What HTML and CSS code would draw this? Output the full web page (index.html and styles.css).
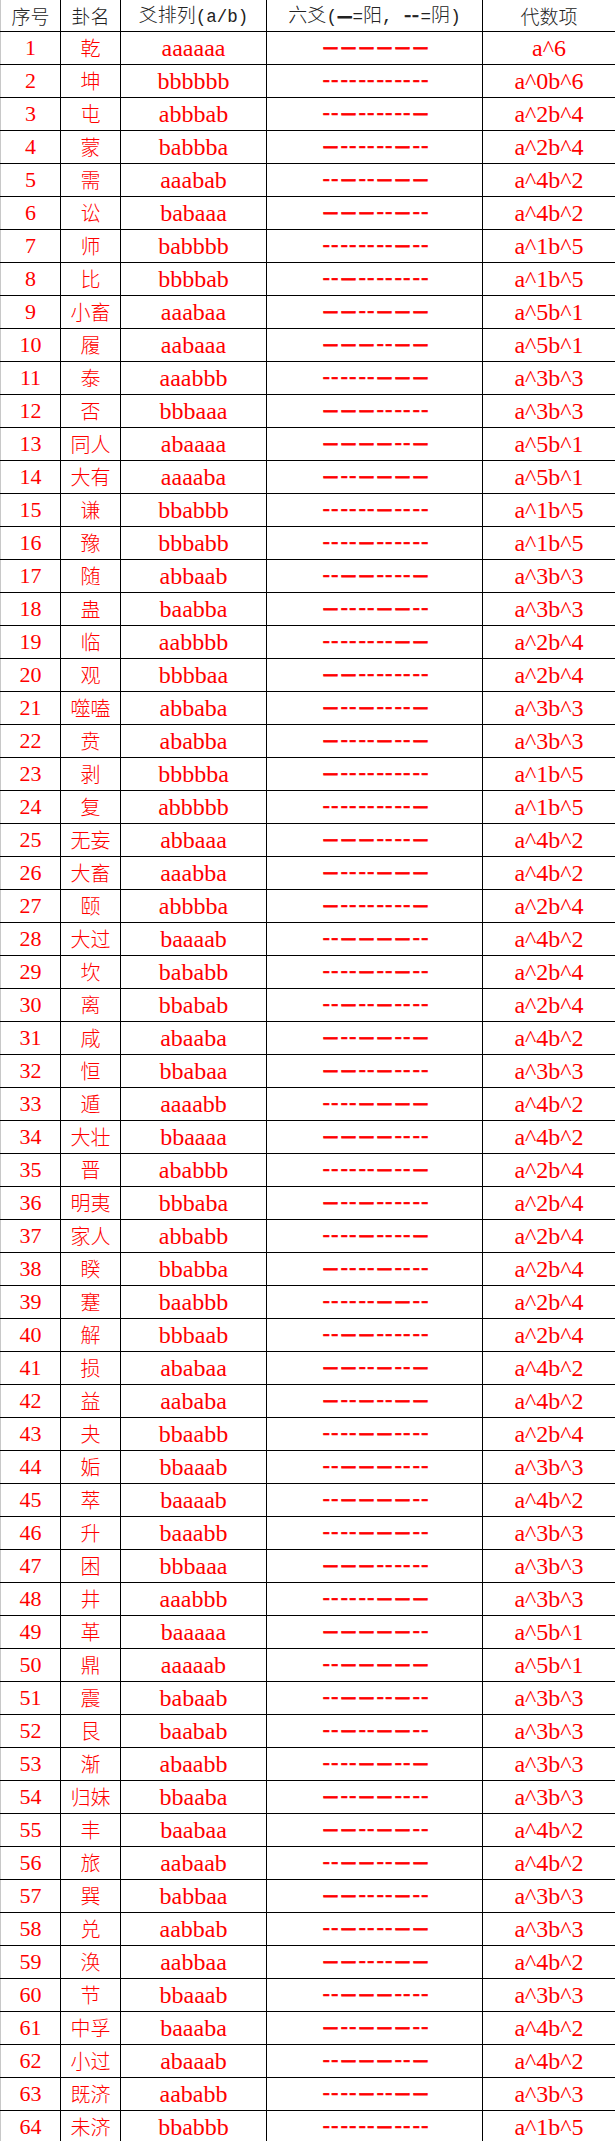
FILE: index.html
```html
<!DOCTYPE html>
<html lang="zh-CN">
<head>
<meta charset="utf-8">
<title>六十四卦</title>
<link rel="stylesheet" href="styles.css">
</head>
<body>
<table class="gua">
<colgroup><col class="c1"><col class="c2"><col class="c3"><col class="c4"><col class="c5"></colgroup>
<thead>
<tr><th>序号</th><th>卦名</th><th>爻排列<span class="hl">(a/b)</span></th><th>六爻<span class="hl">(</span><span class="hy">━</span><span class="hl">=</span>阳<span class="hl">, </span><span class="hn">--</span><span class="hl">=</span>阴<span class="hl">)</span></th><th>代数项</th></tr>
</thead>
<tbody>
<tr><td class="no">1</td><td class="nm">乾</td><td class="ar">aaaaaa</td><td><div class="yao"><span class="yang">━</span><span class="yang">━</span><span class="yang">━</span><span class="yang">━</span><span class="yang">━</span><span class="yang">━</span></div></td><td class="al">a^6</td></tr>
<tr><td class="no">2</td><td class="nm">坤</td><td class="ar">bbbbbb</td><td><div class="yao"><span class="yin">--</span><span class="yin">--</span><span class="yin">--</span><span class="yin">--</span><span class="yin">--</span><span class="yin">--</span></div></td><td class="al">a^0b^6</td></tr>
<tr><td class="no">3</td><td class="nm">屯</td><td class="ar">abbbab</td><td><div class="yao"><span class="yin">--</span><span class="yang">━</span><span class="yin">--</span><span class="yin">--</span><span class="yin">--</span><span class="yang">━</span></div></td><td class="al">a^2b^4</td></tr>
<tr><td class="no">4</td><td class="nm">蒙</td><td class="ar">babbba</td><td><div class="yao"><span class="yang">━</span><span class="yin">--</span><span class="yin">--</span><span class="yin">--</span><span class="yang">━</span><span class="yin">--</span></div></td><td class="al">a^2b^4</td></tr>
<tr><td class="no">5</td><td class="nm">需</td><td class="ar">aaabab</td><td><div class="yao"><span class="yin">--</span><span class="yang">━</span><span class="yin">--</span><span class="yang">━</span><span class="yang">━</span><span class="yang">━</span></div></td><td class="al">a^4b^2</td></tr>
<tr><td class="no">6</td><td class="nm">讼</td><td class="ar">babaaa</td><td><div class="yao"><span class="yang">━</span><span class="yang">━</span><span class="yang">━</span><span class="yin">--</span><span class="yang">━</span><span class="yin">--</span></div></td><td class="al">a^4b^2</td></tr>
<tr><td class="no">7</td><td class="nm">师</td><td class="ar">babbbb</td><td><div class="yao"><span class="yin">--</span><span class="yin">--</span><span class="yin">--</span><span class="yin">--</span><span class="yang">━</span><span class="yin">--</span></div></td><td class="al">a^1b^5</td></tr>
<tr><td class="no">8</td><td class="nm">比</td><td class="ar">bbbbab</td><td><div class="yao"><span class="yin">--</span><span class="yang">━</span><span class="yin">--</span><span class="yin">--</span><span class="yin">--</span><span class="yin">--</span></div></td><td class="al">a^1b^5</td></tr>
<tr><td class="no">9</td><td class="nm">小畜</td><td class="ar">aaabaa</td><td><div class="yao"><span class="yang">━</span><span class="yang">━</span><span class="yin">--</span><span class="yang">━</span><span class="yang">━</span><span class="yang">━</span></div></td><td class="al">a^5b^1</td></tr>
<tr><td class="no">10</td><td class="nm">履</td><td class="ar">aabaaa</td><td><div class="yao"><span class="yang">━</span><span class="yang">━</span><span class="yang">━</span><span class="yin">--</span><span class="yang">━</span><span class="yang">━</span></div></td><td class="al">a^5b^1</td></tr>
<tr><td class="no">11</td><td class="nm">泰</td><td class="ar">aaabbb</td><td><div class="yao"><span class="yin">--</span><span class="yin">--</span><span class="yin">--</span><span class="yang">━</span><span class="yang">━</span><span class="yang">━</span></div></td><td class="al">a^3b^3</td></tr>
<tr><td class="no">12</td><td class="nm">否</td><td class="ar">bbbaaa</td><td><div class="yao"><span class="yang">━</span><span class="yang">━</span><span class="yang">━</span><span class="yin">--</span><span class="yin">--</span><span class="yin">--</span></div></td><td class="al">a^3b^3</td></tr>
<tr><td class="no">13</td><td class="nm">同人</td><td class="ar">abaaaa</td><td><div class="yao"><span class="yang">━</span><span class="yang">━</span><span class="yang">━</span><span class="yang">━</span><span class="yin">--</span><span class="yang">━</span></div></td><td class="al">a^5b^1</td></tr>
<tr><td class="no">14</td><td class="nm">大有</td><td class="ar">aaaaba</td><td><div class="yao"><span class="yang">━</span><span class="yin">--</span><span class="yang">━</span><span class="yang">━</span><span class="yang">━</span><span class="yang">━</span></div></td><td class="al">a^5b^1</td></tr>
<tr><td class="no">15</td><td class="nm">谦</td><td class="ar">bbabbb</td><td><div class="yao"><span class="yin">--</span><span class="yin">--</span><span class="yin">--</span><span class="yang">━</span><span class="yin">--</span><span class="yin">--</span></div></td><td class="al">a^1b^5</td></tr>
<tr><td class="no">16</td><td class="nm">豫</td><td class="ar">bbbabb</td><td><div class="yao"><span class="yin">--</span><span class="yin">--</span><span class="yang">━</span><span class="yin">--</span><span class="yin">--</span><span class="yin">--</span></div></td><td class="al">a^1b^5</td></tr>
<tr><td class="no">17</td><td class="nm">随</td><td class="ar">abbaab</td><td><div class="yao"><span class="yin">--</span><span class="yang">━</span><span class="yang">━</span><span class="yin">--</span><span class="yin">--</span><span class="yang">━</span></div></td><td class="al">a^3b^3</td></tr>
<tr><td class="no">18</td><td class="nm">蛊</td><td class="ar">baabba</td><td><div class="yao"><span class="yang">━</span><span class="yin">--</span><span class="yin">--</span><span class="yang">━</span><span class="yang">━</span><span class="yin">--</span></div></td><td class="al">a^3b^3</td></tr>
<tr><td class="no">19</td><td class="nm">临</td><td class="ar">aabbbb</td><td><div class="yao"><span class="yin">--</span><span class="yin">--</span><span class="yin">--</span><span class="yin">--</span><span class="yang">━</span><span class="yang">━</span></div></td><td class="al">a^2b^4</td></tr>
<tr><td class="no">20</td><td class="nm">观</td><td class="ar">bbbbaa</td><td><div class="yao"><span class="yang">━</span><span class="yang">━</span><span class="yin">--</span><span class="yin">--</span><span class="yin">--</span><span class="yin">--</span></div></td><td class="al">a^2b^4</td></tr>
<tr><td class="no">21</td><td class="nm">噬嗑</td><td class="ar">abbaba</td><td><div class="yao"><span class="yang">━</span><span class="yin">--</span><span class="yang">━</span><span class="yin">--</span><span class="yin">--</span><span class="yang">━</span></div></td><td class="al">a^3b^3</td></tr>
<tr><td class="no">22</td><td class="nm">贲</td><td class="ar">ababba</td><td><div class="yao"><span class="yang">━</span><span class="yin">--</span><span class="yin">--</span><span class="yang">━</span><span class="yin">--</span><span class="yang">━</span></div></td><td class="al">a^3b^3</td></tr>
<tr><td class="no">23</td><td class="nm">剥</td><td class="ar">bbbbba</td><td><div class="yao"><span class="yang">━</span><span class="yin">--</span><span class="yin">--</span><span class="yin">--</span><span class="yin">--</span><span class="yin">--</span></div></td><td class="al">a^1b^5</td></tr>
<tr><td class="no">24</td><td class="nm">复</td><td class="ar">abbbbb</td><td><div class="yao"><span class="yin">--</span><span class="yin">--</span><span class="yin">--</span><span class="yin">--</span><span class="yin">--</span><span class="yang">━</span></div></td><td class="al">a^1b^5</td></tr>
<tr><td class="no">25</td><td class="nm">无妄</td><td class="ar">abbaaa</td><td><div class="yao"><span class="yang">━</span><span class="yang">━</span><span class="yang">━</span><span class="yin">--</span><span class="yin">--</span><span class="yang">━</span></div></td><td class="al">a^4b^2</td></tr>
<tr><td class="no">26</td><td class="nm">大畜</td><td class="ar">aaabba</td><td><div class="yao"><span class="yang">━</span><span class="yin">--</span><span class="yin">--</span><span class="yang">━</span><span class="yang">━</span><span class="yang">━</span></div></td><td class="al">a^4b^2</td></tr>
<tr><td class="no">27</td><td class="nm">颐</td><td class="ar">abbbba</td><td><div class="yao"><span class="yang">━</span><span class="yin">--</span><span class="yin">--</span><span class="yin">--</span><span class="yin">--</span><span class="yang">━</span></div></td><td class="al">a^2b^4</td></tr>
<tr><td class="no">28</td><td class="nm">大过</td><td class="ar">baaaab</td><td><div class="yao"><span class="yin">--</span><span class="yang">━</span><span class="yang">━</span><span class="yang">━</span><span class="yang">━</span><span class="yin">--</span></div></td><td class="al">a^4b^2</td></tr>
<tr><td class="no">29</td><td class="nm">坎</td><td class="ar">bababb</td><td><div class="yao"><span class="yin">--</span><span class="yin">--</span><span class="yang">━</span><span class="yin">--</span><span class="yang">━</span><span class="yin">--</span></div></td><td class="al">a^2b^4</td></tr>
<tr><td class="no">30</td><td class="nm">离</td><td class="ar">bbabab</td><td><div class="yao"><span class="yin">--</span><span class="yang">━</span><span class="yin">--</span><span class="yang">━</span><span class="yin">--</span><span class="yin">--</span></div></td><td class="al">a^2b^4</td></tr>
<tr><td class="no">31</td><td class="nm">咸</td><td class="ar">abaaba</td><td><div class="yao"><span class="yang">━</span><span class="yin">--</span><span class="yang">━</span><span class="yang">━</span><span class="yin">--</span><span class="yang">━</span></div></td><td class="al">a^4b^2</td></tr>
<tr><td class="no">32</td><td class="nm">恒</td><td class="ar">bbabaa</td><td><div class="yao"><span class="yang">━</span><span class="yang">━</span><span class="yin">--</span><span class="yang">━</span><span class="yin">--</span><span class="yin">--</span></div></td><td class="al">a^3b^3</td></tr>
<tr><td class="no">33</td><td class="nm">遁</td><td class="ar">aaaabb</td><td><div class="yao"><span class="yin">--</span><span class="yin">--</span><span class="yang">━</span><span class="yang">━</span><span class="yang">━</span><span class="yang">━</span></div></td><td class="al">a^4b^2</td></tr>
<tr><td class="no">34</td><td class="nm">大壮</td><td class="ar">bbaaaa</td><td><div class="yao"><span class="yang">━</span><span class="yang">━</span><span class="yang">━</span><span class="yang">━</span><span class="yin">--</span><span class="yin">--</span></div></td><td class="al">a^4b^2</td></tr>
<tr><td class="no">35</td><td class="nm">晋</td><td class="ar">ababbb</td><td><div class="yao"><span class="yin">--</span><span class="yin">--</span><span class="yin">--</span><span class="yang">━</span><span class="yin">--</span><span class="yang">━</span></div></td><td class="al">a^2b^4</td></tr>
<tr><td class="no">36</td><td class="nm">明夷</td><td class="ar">bbbaba</td><td><div class="yao"><span class="yang">━</span><span class="yin">--</span><span class="yang">━</span><span class="yin">--</span><span class="yin">--</span><span class="yin">--</span></div></td><td class="al">a^2b^4</td></tr>
<tr><td class="no">37</td><td class="nm">家人</td><td class="ar">abbabb</td><td><div class="yao"><span class="yin">--</span><span class="yin">--</span><span class="yang">━</span><span class="yin">--</span><span class="yin">--</span><span class="yang">━</span></div></td><td class="al">a^2b^4</td></tr>
<tr><td class="no">38</td><td class="nm">睽</td><td class="ar">bbabba</td><td><div class="yao"><span class="yang">━</span><span class="yin">--</span><span class="yin">--</span><span class="yang">━</span><span class="yin">--</span><span class="yin">--</span></div></td><td class="al">a^2b^4</td></tr>
<tr><td class="no">39</td><td class="nm">蹇</td><td class="ar">baabbb</td><td><div class="yao"><span class="yin">--</span><span class="yin">--</span><span class="yin">--</span><span class="yang">━</span><span class="yang">━</span><span class="yin">--</span></div></td><td class="al">a^2b^4</td></tr>
<tr><td class="no">40</td><td class="nm">解</td><td class="ar">bbbaab</td><td><div class="yao"><span class="yin">--</span><span class="yang">━</span><span class="yang">━</span><span class="yin">--</span><span class="yin">--</span><span class="yin">--</span></div></td><td class="al">a^2b^4</td></tr>
<tr><td class="no">41</td><td class="nm">损</td><td class="ar">ababaa</td><td><div class="yao"><span class="yang">━</span><span class="yang">━</span><span class="yin">--</span><span class="yang">━</span><span class="yin">--</span><span class="yang">━</span></div></td><td class="al">a^4b^2</td></tr>
<tr><td class="no">42</td><td class="nm">益</td><td class="ar">aababa</td><td><div class="yao"><span class="yang">━</span><span class="yin">--</span><span class="yang">━</span><span class="yin">--</span><span class="yang">━</span><span class="yang">━</span></div></td><td class="al">a^4b^2</td></tr>
<tr><td class="no">43</td><td class="nm">夬</td><td class="ar">bbaabb</td><td><div class="yao"><span class="yin">--</span><span class="yin">--</span><span class="yang">━</span><span class="yang">━</span><span class="yin">--</span><span class="yin">--</span></div></td><td class="al">a^2b^4</td></tr>
<tr><td class="no">44</td><td class="nm">姤</td><td class="ar">bbaaab</td><td><div class="yao"><span class="yin">--</span><span class="yang">━</span><span class="yang">━</span><span class="yang">━</span><span class="yin">--</span><span class="yin">--</span></div></td><td class="al">a^3b^3</td></tr>
<tr><td class="no">45</td><td class="nm">萃</td><td class="ar">baaaab</td><td><div class="yao"><span class="yin">--</span><span class="yang">━</span><span class="yang">━</span><span class="yang">━</span><span class="yang">━</span><span class="yin">--</span></div></td><td class="al">a^4b^2</td></tr>
<tr><td class="no">46</td><td class="nm">升</td><td class="ar">baaabb</td><td><div class="yao"><span class="yin">--</span><span class="yin">--</span><span class="yang">━</span><span class="yang">━</span><span class="yang">━</span><span class="yin">--</span></div></td><td class="al">a^3b^3</td></tr>
<tr><td class="no">47</td><td class="nm">困</td><td class="ar">bbbaaa</td><td><div class="yao"><span class="yang">━</span><span class="yang">━</span><span class="yang">━</span><span class="yin">--</span><span class="yin">--</span><span class="yin">--</span></div></td><td class="al">a^3b^3</td></tr>
<tr><td class="no">48</td><td class="nm">井</td><td class="ar">aaabbb</td><td><div class="yao"><span class="yin">--</span><span class="yin">--</span><span class="yin">--</span><span class="yang">━</span><span class="yang">━</span><span class="yang">━</span></div></td><td class="al">a^3b^3</td></tr>
<tr><td class="no">49</td><td class="nm">革</td><td class="ar">baaaaa</td><td><div class="yao"><span class="yang">━</span><span class="yang">━</span><span class="yang">━</span><span class="yang">━</span><span class="yang">━</span><span class="yin">--</span></div></td><td class="al">a^5b^1</td></tr>
<tr><td class="no">50</td><td class="nm">鼎</td><td class="ar">aaaaab</td><td><div class="yao"><span class="yin">--</span><span class="yang">━</span><span class="yang">━</span><span class="yang">━</span><span class="yang">━</span><span class="yang">━</span></div></td><td class="al">a^5b^1</td></tr>
<tr><td class="no">51</td><td class="nm">震</td><td class="ar">babaab</td><td><div class="yao"><span class="yin">--</span><span class="yang">━</span><span class="yang">━</span><span class="yin">--</span><span class="yang">━</span><span class="yin">--</span></div></td><td class="al">a^3b^3</td></tr>
<tr><td class="no">52</td><td class="nm">艮</td><td class="ar">baabab</td><td><div class="yao"><span class="yin">--</span><span class="yang">━</span><span class="yin">--</span><span class="yang">━</span><span class="yang">━</span><span class="yin">--</span></div></td><td class="al">a^3b^3</td></tr>
<tr><td class="no">53</td><td class="nm">渐</td><td class="ar">abaabb</td><td><div class="yao"><span class="yin">--</span><span class="yin">--</span><span class="yang">━</span><span class="yang">━</span><span class="yin">--</span><span class="yang">━</span></div></td><td class="al">a^3b^3</td></tr>
<tr><td class="no">54</td><td class="nm">归妹</td><td class="ar">bbaaba</td><td><div class="yao"><span class="yang">━</span><span class="yin">--</span><span class="yang">━</span><span class="yang">━</span><span class="yin">--</span><span class="yin">--</span></div></td><td class="al">a^3b^3</td></tr>
<tr><td class="no">55</td><td class="nm">丰</td><td class="ar">baabaa</td><td><div class="yao"><span class="yang">━</span><span class="yang">━</span><span class="yin">--</span><span class="yang">━</span><span class="yang">━</span><span class="yin">--</span></div></td><td class="al">a^4b^2</td></tr>
<tr><td class="no">56</td><td class="nm">旅</td><td class="ar">aabaab</td><td><div class="yao"><span class="yin">--</span><span class="yang">━</span><span class="yang">━</span><span class="yin">--</span><span class="yang">━</span><span class="yang">━</span></div></td><td class="al">a^4b^2</td></tr>
<tr><td class="no">57</td><td class="nm">巽</td><td class="ar">babbaa</td><td><div class="yao"><span class="yang">━</span><span class="yang">━</span><span class="yin">--</span><span class="yin">--</span><span class="yang">━</span><span class="yin">--</span></div></td><td class="al">a^3b^3</td></tr>
<tr><td class="no">58</td><td class="nm">兑</td><td class="ar">aabbab</td><td><div class="yao"><span class="yin">--</span><span class="yang">━</span><span class="yin">--</span><span class="yin">--</span><span class="yang">━</span><span class="yang">━</span></div></td><td class="al">a^3b^3</td></tr>
<tr><td class="no">59</td><td class="nm">涣</td><td class="ar">aabbaa</td><td><div class="yao"><span class="yang">━</span><span class="yang">━</span><span class="yin">--</span><span class="yin">--</span><span class="yang">━</span><span class="yang">━</span></div></td><td class="al">a^4b^2</td></tr>
<tr><td class="no">60</td><td class="nm">节</td><td class="ar">bbaaab</td><td><div class="yao"><span class="yin">--</span><span class="yang">━</span><span class="yang">━</span><span class="yang">━</span><span class="yin">--</span><span class="yin">--</span></div></td><td class="al">a^3b^3</td></tr>
<tr><td class="no">61</td><td class="nm">中孚</td><td class="ar">baaaba</td><td><div class="yao"><span class="yang">━</span><span class="yin">--</span><span class="yang">━</span><span class="yang">━</span><span class="yang">━</span><span class="yin">--</span></div></td><td class="al">a^4b^2</td></tr>
<tr><td class="no">62</td><td class="nm">小过</td><td class="ar">abaaab</td><td><div class="yao"><span class="yin">--</span><span class="yang">━</span><span class="yang">━</span><span class="yang">━</span><span class="yin">--</span><span class="yang">━</span></div></td><td class="al">a^4b^2</td></tr>
<tr><td class="no">63</td><td class="nm">既济</td><td class="ar">aababb</td><td><div class="yao"><span class="yin">--</span><span class="yin">--</span><span class="yang">━</span><span class="yin">--</span><span class="yang">━</span><span class="yang">━</span></div></td><td class="al">a^3b^3</td></tr>
<tr><td class="no">64</td><td class="nm">未济</td><td class="ar">bbabbb</td><td><div class="yao"><span class="yin">--</span><span class="yin">--</span><span class="yin">--</span><span class="yang">━</span><span class="yin">--</span><span class="yin">--</span></div></td><td class="al">a^1b^5</td></tr>
</tbody>
</table>
</body>
</html>
```
FILE: styles.css
```css
html, body {
  margin: 0;
  padding: 0;
  background: #ffffff;
}

.gua {
  border-collapse: collapse;
  table-layout: fixed;
  width: 615px;
}

.c1 { width: 60px; }
.c2 { width: 60px; }
.c3 { width: 146px; }
.c4 { width: 216px; }
.c5 { width: 133px; }

.gua th,
.gua td {
  border: 1px solid #000;
  padding: 0;
  text-align: center;
  vertical-align: middle;
  white-space: nowrap;
}

.gua th:first-child,
.gua td:first-child {
  border-left-color: #c8c8c8;
}

.gua thead th {
  border-top: none;
  height: 27px;
  font-family: "Noto Sans CJK SC", sans-serif;
  font-weight: 300;
  font-size: 19px;
  line-height: 27px;
  color: #222;
}

.hl {
  font-family: "Liberation Mono", monospace;
  font-size: 17.5px;
  white-space: pre;
}

.hy {
  font-family: "Noto Sans CJK SC", sans-serif;
  font-size: 13.5px;
  -webkit-text-stroke: 1px #222;
  margin: 0 1px;
}

.hn {
  font-family: "Liberation Sans", sans-serif;
  font-size: 22px;
  letter-spacing: 0.5px;
  -webkit-text-stroke: 0.4px #222;
  margin: 0 1px;
}

.gua tbody td {
  height: 32px;
  color: #ff0000;
  font-family: "Liberation Serif", serif;
  font-size: 24px;
  line-height: 28px;
}

.gua tbody td.no {
  font-size: 22px;
}

.gua tbody td.nm {
  font-family: "Noto Sans CJK SC", sans-serif;
  font-weight: 300;
  font-size: 20px;
}

.yao {
  display: grid;
  grid-template-columns: repeat(6, 18px);
  justify-content: center;
  justify-items: center;
  align-items: center;
  padding-left: 2px;
}

.yang {
  font-family: "Noto Sans CJK SC", sans-serif;
  font-weight: 400;
  font-size: 13.5px;
  line-height: 1;
  margin-bottom: 1.5px;
  -webkit-text-stroke: 0.9px #ff0000;
}

.yin {
  font-family: "Liberation Sans", sans-serif;
  font-size: 24px;
  letter-spacing: 0.6px;
  padding-left: 0.6px;
  line-height: 1;
  margin-bottom: 4px;
  -webkit-text-stroke: 0.3px #ff0000;
}
```
